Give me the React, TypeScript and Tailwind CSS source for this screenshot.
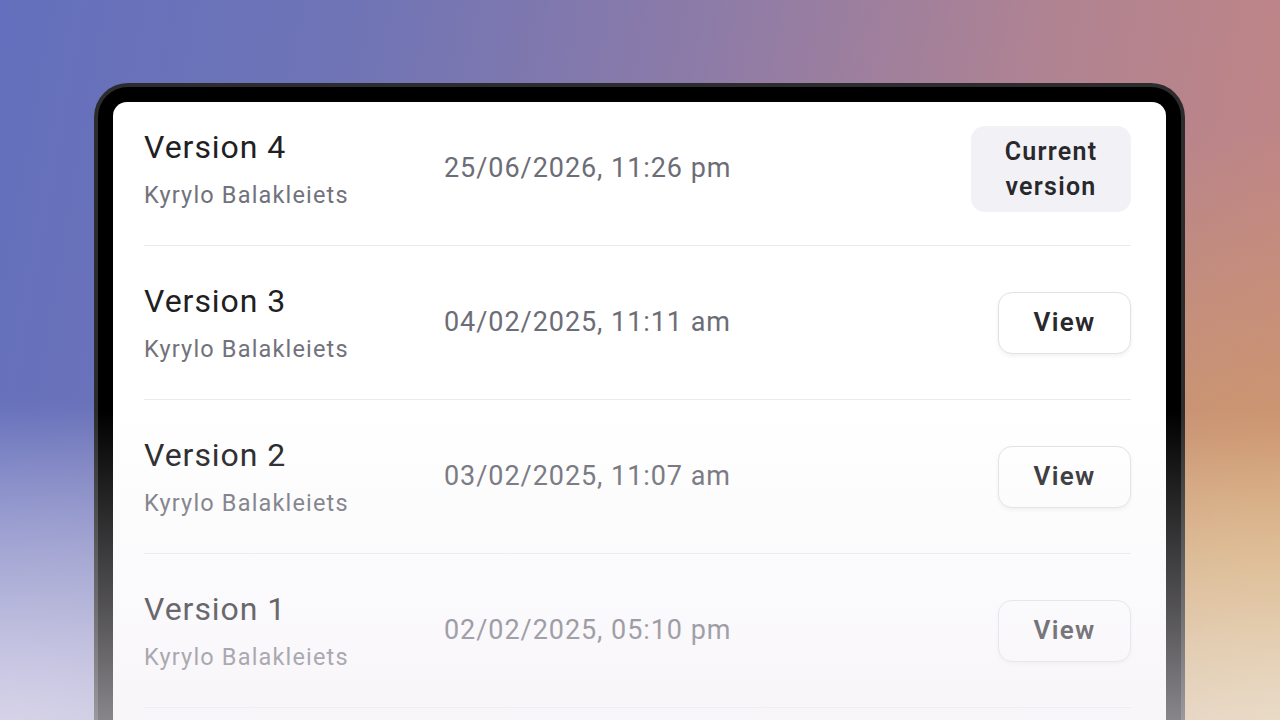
type Version = {
  name: string;
  author: string;
  date: string;
  current?: boolean;
};

const versions: Version[] = [
  { name: "Version 4", author: "Kyrylo Balakleiets", date: "25/06/2026, 11:26 pm", current: true },
  { name: "Version 3", author: "Kyrylo Balakleiets", date: "04/02/2025, 11:11 am" },
  { name: "Version 2", author: "Kyrylo Balakleiets", date: "03/02/2025, 11:07 am" },
  { name: "Version 1", author: "Kyrylo Balakleiets", date: "02/02/2025, 05:10 pm" },
];

function VersionRow({ v }: { v: Version }) {
  return (
    <div className="h-[154px] flex items-center border-b border-[#ebebee]">
      <div className="w-[300px] flex flex-col">
        <span className="text-[32px] leading-[40px] tracking-[0.03em] text-[#202023]">{v.name}</span>
        <span className="mt-[12px] text-[23.5px] leading-[32px] tracking-[0.05em] text-[#71727b]">{v.author}</span>
      </div>
      <div className="flex-1 text-[27px] tracking-[0.035em] text-[#6c6d76]">{v.date}</div>
      {v.current ? (
        <div className="w-[160px] h-[86px] rounded-[14px] bg-[#f2f2f6] flex flex-col items-center justify-center text-[25px] leading-[35px] font-semibold tracking-[0.05em] text-[#29292d]">
          <span>Current</span>
          <span>version</span>
        </div>
      ) : (
        <button className="w-[133px] h-[62px] rounded-[14px] border border-[#e2e2e6] bg-white shadow-[0_2px_4px_rgba(0,0,0,0.06)] text-[26px] font-semibold tracking-[0.05em] text-[#29292d]">
          View
        </button>
      )}
    </div>
  );
}

export default function App() {
  return (
    <div
      className="relative h-screen w-full overflow-hidden bg-[linear-gradient(100deg,#6470bd_0%,#6f74b6_25%,#8c7ba8_50%,#b08392_75%,#c48682_100%)]"
      style={{ fontFamily: "Roboto, 'Noto Sans', sans-serif" }}
    >
      {/* warm glow on the right side */}
      <div className="absolute inset-0 bg-[radial-gradient(ellipse_55%_60%_at_100%_78%,rgba(212,160,100,0.9)_0%,rgba(212,160,100,0)_100%)]" />
      <div className="absolute inset-0 bg-[radial-gradient(ellipse_35%_40%_at_100%_100%,rgba(226,206,150,0.8)_0%,rgba(226,206,150,0)_100%)]" />
      {/* cool lightening toward the lower left */}
      <div className="absolute inset-0 bg-[radial-gradient(ellipse_50%_45%_at_0%_100%,rgba(210,204,230,0.7)_0%,rgba(210,204,230,0)_100%)]" />

      {/* device */}
      <div className="relative ml-[94px] mt-[83px] w-[1091px] rounded-[34px] bg-[#2c2c2e] p-[4px]">
        <div className="rounded-[30px] bg-black p-[15px] pb-0">
          <div className="h-[700px] overflow-hidden rounded-t-[14px] bg-white pl-[31px] pr-[35px]">
            <div className="-mt-[10px]">
              {versions.map((v) => (
                <VersionRow key={v.name} v={v} />
              ))}
            </div>
          </div>
        </div>
      </div>

      {/* haze fading the lower part of the page */}
      <div className="pointer-events-none absolute inset-0 bg-[linear-gradient(to_bottom,rgba(242,238,244,0)_57%,rgba(242,238,244,0.35)_85%,rgba(242,238,244,0.56)_100%)]" />
    </div>
  );
}
